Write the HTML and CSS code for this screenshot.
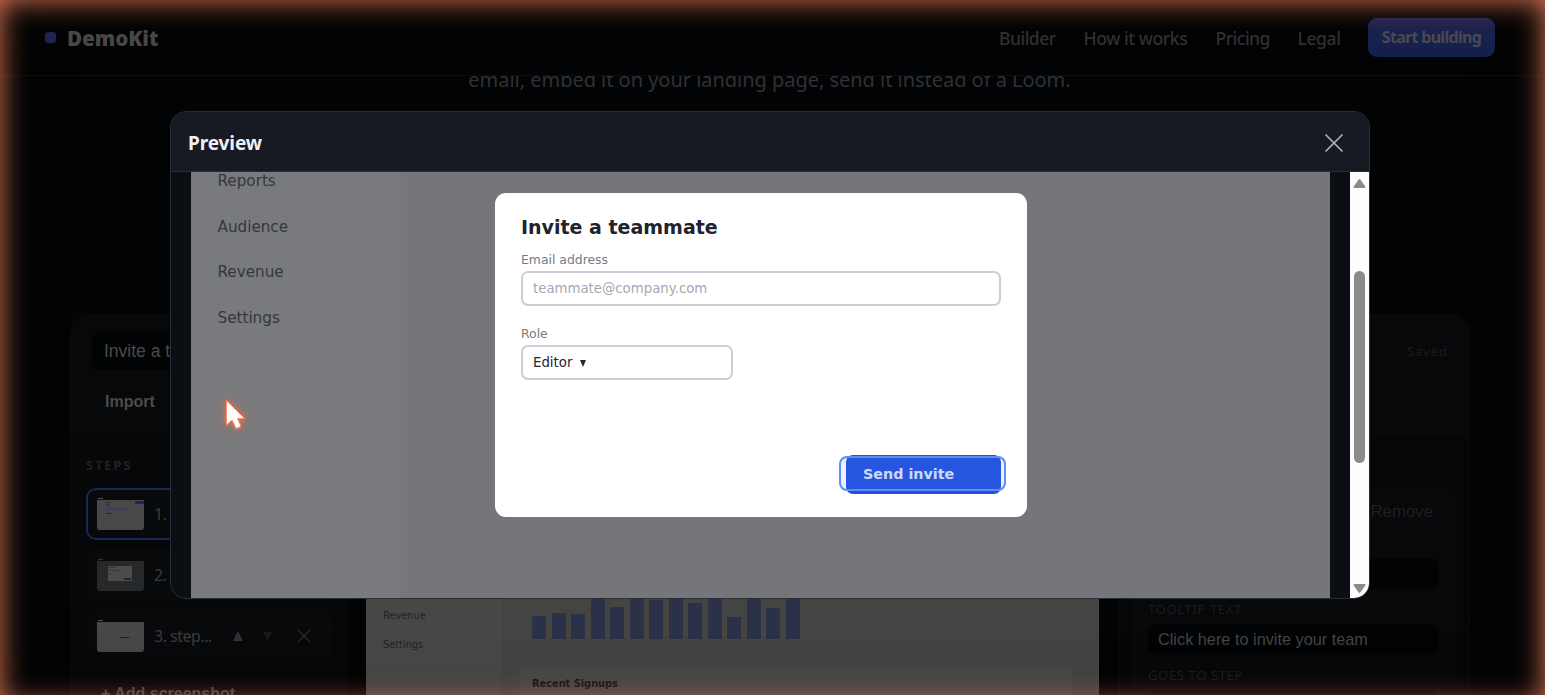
FILE: index.html
```html
<!DOCTYPE html>
<html lang="en">
<head>
  <meta charset="UTF-8" />
  <title>DemoKit</title>
  <meta name="viewport" content="width=device-width, initial-scale=1.0"/>
  <link rel="stylesheet" href="styles.css">
</head>
<body>
  <header class="topbar">
    <div class="brand"><span class="dot"></span><span class="brand-name">DemoKit</span></div>
    <nav class="nav">
      <a class="nav-builder">Builder</a>
      <a class="nav-how">How it works</a>
      <a class="nav-pricing">Pricing</a>
      <a class="nav-legal">Legal</a>
      <a class="cta">Start building</a>
    </nav>
  </header>

  <section class="hero">
    <p>email, embed it on your landing page, send it instead of a Loom.</p>
  </section>

  <main class="builder">
    <div class="toolbar">
      <div class="toolbar-row">
        <div class="title-input">Invite a teammate</div>
        <span class="saved">Saved</span>
      </div>
      <button class="import">Import</button>
    </div>
    <div class="workspace">
      <aside class="steps">
        <h2>STEPS</h2>
        <div class="step active">
          <svg class="thumb" width="47" height="33" viewBox="0 0 47 33">
            <path d="M0 2h47v27q0 3-3 3H3q-3 0-3-3z" fill="#484848"/>
            <path d="M1 .5h5" stroke="#555"/>
            <path d="M38 4.500h9" stroke="#1b2756" stroke-width="3"/>
            <path d="M9 4.500h5M9 7h4M9 15.500h6" stroke="#2b2b2b"/>
            <path d="M9 11.500h3m1-1h2m1 1h2m1-1h2m1 1h2m1-1h2m1 1h2" stroke="#383f5a" stroke-width="3"/>
          </svg>
          <span>1. step...</span>
        </div>
        <div class="step">
          <svg class="thumb" width="47" height="33" viewBox="0 0 47 33">
            <path d="M0 2h47v27q0 3-3 3H3q-3 0-3-3z" fill="#26282a"/>
            <path d="M1 .5h5" stroke="#333"/>
            <path d="M11 7h24v15H11z" fill="#4b4b4a"/>
            <path d="M12 8.500h7M12 11.500h12M12 14.500h2" stroke="#383838"/>
            <path d="M27 20h7" stroke="#18234e" stroke-width="2"/>
          </svg>
          <span>2. step...</span>
        </div>
        <div class="step">
          <svg class="thumb" width="47" height="33" viewBox="0 0 47 33">
            <path d="M0 2h47v27q0 3-3 3H3q-3 0-3-3z" fill="#474747"/>
            <path d="M1 .5h5" stroke="#555"/>
            <path d="M23 17.500h9" stroke="#202020"/>
          </svg>
          <span class="step-name">3. step...</span>
          <svg class="step-tools" width="84" height="16" viewBox="0 0 84 16">
            <path d="M0 13 5 3l5 10z" fill="#303236"/>
            <path d="M30 4h9l-4.500 9z" fill="#17181a"/>
            <path d="m65 2 12 12M77 2 65 14" stroke="#292a2d" stroke-width="1.200"/>
          </svg>
        </div>
        <button class="add">+ Add screenshot</button>
      </aside>

      <section class="canvas">
        <div class="shot">
          <div class="shot-nav">
            <span>Revenue</span>
            <span>Settings</span>
          </div>
          <div class="shot-main">
            <div class="chart">
              <i class="h23"></i><i class="h26"></i><i class="h25"></i><i class="h45"></i>
              <i class="h32"></i><i class="h45"></i><i class="h39"></i><i class="h45"></i>
              <i class="h36"></i><i class="h45"></i><i class="h22"></i><i class="h45"></i>
              <i class="h31"></i><i class="h45"></i>
            </div>
            <div class="signups">Recent Signups</div>
          </div>
        </div>
      </section>

      <aside class="props">
        <div class="hotspot">
          <span class="remove">Remove</span>
          <div class="field"></div>
          <label class="tooltip-label">TOOLTIP TEXT</label>
          <div class="field">Click here to invite your team</div>
          <label class="goes-label">GOES TO STEP</label>
          <div class="field"></div>
        </div>
      </aside>
    </div>
  </main>

  <div class="overlay">
    <div class="modal">
      <div class="modal-head">
        <h3>Preview</h3>
        <svg width="20" height="20" viewBox="0 0 20 20"><path d="m1.500 1.500 17 17M18.500 1.500l-17 17" stroke="#adb1ba" stroke-width="1.700"/></svg>
      </div>
      <div class="modal-body">
        <div class="stage">
          <div class="stage-nav">
            <span>Reports</span>
            <span>Audience</span>
            <span>Revenue</span>
            <span>Settings</span>
          </div>
          <div class="stage-main">
            <div class="invite">
              <h4>Invite a teammate</h4>
              <label>Email address</label>
              <div class="input placeholder">teammate@company.com</div>
              <label class="role">Role</label>
              <div class="input select">Editor <span class="caret"></span></div>
              <div class="send">Send invite<span class="send-ring"></span></div>
            </div>
          </div>
        </div>
        <div class="scrollbar">
          <svg width="13" height="11" viewBox="0 0 13 11"><path d="M6.500 2 11.500 9h-10z" fill="#8b8b8b" stroke="#8b8b8b" stroke-width="2" stroke-linejoin="round"/></svg>
          <div class="track"><div class="thumb-bar"></div></div>
          <svg width="13" height="11" viewBox="0 0 13 11"><path d="M6.500 9 1.500 2h10z" fill="#8b8b8b" stroke="#8b8b8b" stroke-width="2" stroke-linejoin="round"/></svg>
        </div>
      </div>
    </div>
  </div>

  <svg class="cursor" width="24" height="34" viewBox="0 0 24 34">
    <path d="M2.500 2.500v24.500l5.500-5 4 8.500 5-2-3.500-8h7z" fill="#fff" stroke="#ff8a66" stroke-width="1"/>
  </svg>
  <div class="glow"></div>
</body>
</html>
```
FILE: styles.css
```css
* {
  box-sizing: border-box;
}
body {
  margin: 0;
  height: 695px;
  overflow: hidden;
  background: #020305;
  color: #414141;
  font-family: "Noto Sans", "Open Sans", sans-serif;
}
button {
  border: 0;
  padding: 0;
  background: none;
  color: #4b4b4b;
  font: bold 16px "Liberation Sans", Arial, sans-serif;
}
.topbar {
  position: relative;
  z-index: 1;
  height: 76px;
  padding: 0 50px 0 45px;
  display: flex;
  align-items: center;
  justify-content: space-between;
  background: #020304;
  border-bottom: 1px solid #0c0d0e;
}
.brand {
  display: flex;
  align-items: center;
  gap: 11px;
  font-size: 20.500px;
  font-weight: 900;
  letter-spacing: 0;
  color: #484848;
}
.brand-name {
  padding-top: 1px;
}
.dot {
  width: 11px;
  height: 11px;
  border-radius: 3px;
  background: #1b2452;
}
.nav {
  display: flex;
  align-items: center;
  gap: 27px;
  font-size: 17.500px;
  font-weight: 500;
  color: #303134;
  white-space: nowrap;
}
.nav-builder {
  width: 57.500px;
  letter-spacing: -0.5px;
}
.nav-how {
  width: 105px;
  letter-spacing: -0.4px;
}
.nav-pricing {
  width: 55px;
  letter-spacing: -0.5px;
}
.nav-legal {
  width: 43.500px;
  letter-spacing: -0.4px;
}
.cta {
  width: 127px;
  height: 39px;
  line-height: 39px;
  text-align: center;
  border-radius: 9px;
  background: linear-gradient(#1d2350, #14204f);
  color: #4a4b51;
  font-size: 16px;
  font-weight: 700;
  letter-spacing: -0.7px;
}
.hero {
  height: 238px;
}
.hero p {
  margin: 0 0 0 -6px;
  position: relative;
  top: -10px;
  text-align: center;
  font-size: 20px;
  line-height: 27px;
  letter-spacing: -0.03px;
  color: #303134;
}
.builder {
  width: 1400px;
  height: 420px;
  margin-left: 70px;
  background: #040506;
  border: 1px solid #090a0b;
  border-radius: 18px;
  overflow: hidden;
}
.toolbar {
  height: 121px;
  padding: 17px 21px;
  background: #07080a;
}
.toolbar-row {
  display: flex;
  justify-content: space-between;
  align-items: center;
  height: 38px;
}
.title-input {
  width: 260px;
  height: 38px;
  padding: 0 12px;
  border-radius: 8px;
  background: #020304;
  font: 17.500px/38px "Liberation Sans", Arial, sans-serif;
  color: #4b4b4b;
}
.saved {
  font-size: 13px;
  letter-spacing: 1px;
  color: #1b1c1e;
}
.import {
  margin: 23px 13px;
}
.workspace {
  height: 300px;
  display: grid;
  grid-template-columns: 276px 1fr 351px;
}
.steps {
  padding: 20px 14px 0 15px;
  background: #060709;
  border-right: 1px solid #0a0b0c;
}
.steps h2 {
  margin: 0 0 14px;
  font-size: 13px;
  line-height: 18px;
  letter-spacing: 1.8px;
  color: #202124;
}
.step {
  display: flex;
  align-items: center;
  height: 52px;
  margin-bottom: 9px;
  padding: 0 9px;
  gap: 10px;
  border: 2px solid #08090b;
  border-radius: 10px;
  background: #08090b;
  font-size: 16px;
  line-height: 20px;
  letter-spacing: -0.3px;
  color: #3b3c3e;
}
.step span {
  margin-top: -1px;
}
.step.active {
  border-color: #172a52;
}
.thumb {
  flex: none;
}
.step-name {
  width: 69px;
  letter-spacing: -0.5px;
}
.add {
  display: block;
  margin: 23px 0 0 15px;
  color: #474747;
}
.canvas {
  padding: 0 19px 0 19px;
  background: #020304;
}
.shot {
  display: flex;
  width: 733px;
  height: 300px;
  background: #444443;
  font: 9.800px "DejaVu Sans", sans-serif;
}
.shot-nav {
  width: 136px;
  padding: 168px 17px 0;
  display: flex;
  flex-direction: column;
  gap: 5px;
  line-height: 24px;
  background: #474746;
  color: #222326;
}
.shot-main {
  width: 570px;
  padding: 158px 0 0 17px;
}
.chart {
  display: flex;
  align-items: flex-end;
  gap: 5.500px;
  height: 45px;
  margin-left: 13px;
}
.chart i {
  width: 14px;
  background: #2a3148;
}
.h22 { height: 22px; }
.h23 { height: 23px; }
.h25 { height: 25px; }
.h26 { height: 26px; }
.h31 { height: 31px; }
.h32 { height: 32px; }
.h36 { height: 36px; }
.h39 { height: 39px; }
.h45 { height: 45px; }
.signups {
  height: 80px;
  margin-top: 29px;
  padding: 10px 13px;
  background: #494847;
  font-weight: bold;
  color: #151517;
}
.props {
  padding: 52px 12px 0;
  background: #050607;
  border-left: 1px solid #090a0b;
}
.hotspot {
  height: 260px;
  padding: 11px 18px 0 17px;
  display: flex;
  flex-direction: column;
  border-radius: 8px;
  background: #07080a;
}
.remove {
  align-self: flex-end;
  margin-bottom: 33px;
  padding-right: 6px;
  line-height: 26px;
  font-family: "Liberation Sans", Arial, sans-serif;
  font-size: 16.800px;
  color: #1e1f22;
}
.field {
  flex: none;
  height: 31px;
  padding: 0 10px;
  border-radius: 8px;
  background: #020304;
  font: 16.300px/31px "Liberation Sans", Arial, sans-serif;
  color: #454545;
}
.hotspot label {
  font-size: 13px;
  line-height: 18px;
  letter-spacing: 0.65px;
  color: #1a1b1d;
}
.tooltip-label {
  margin: 11px 0 6px;
}
.goes-label {
  margin: 11px 0 7px;
}

/* Preview dialog */
.overlay {
  position: fixed;
  inset: 0;
  z-index: 5;
  display: flex;
  align-items: flex-start;
  justify-content: center;
  padding: 111px 5px 0 0;
}
.modal {
  width: 1200px;
  height: 488px;
  overflow: hidden;
  border: 1px solid #292d38;
  border-radius: 16px;
  background: #0b0f13;
}
.modal-head {
  display: flex;
  align-items: center;
  justify-content: space-between;
  height: 60px;
  padding: 3px 25px 0 17px;
  border-bottom: 1px solid #292c34;
  background: #171a23;
}
.modal-head h3 {
  margin: 0;
  font-size: 19px;
  font-weight: 700;
  letter-spacing: -0.1px;
  color: #eef0f5;
}
.modal-body {
  display: flex;
  justify-content: space-between;
  height: 426px;
  padding-left: 20px;
}
.stage {
  display: flex;
  width: 1139px;
  background: #757679;
  font-family: "DejaVu Sans", sans-serif;
}
.stage-nav {
  display: flex;
  flex-direction: column;
  gap: 25.500px;
  width: 210px;
  padding: 0 26.500px;
  background: #797a7d;
  color: #34373e;
  font-size: 15.200px;
  line-height: 20px;
}
.stage-nav span:first-child {
  margin-top: -1px;
}
.stage-main {
  flex: 1;
  padding: 21px 0 0 94px;
}
.invite {
  display: flex;
  flex-direction: column;
  width: 532px;
  height: 324px;
  padding: 22px 26px 23px;
  border-radius: 11px;
  background: #fff;
}
.invite h4 {
  margin: 0 0 12px;
  font-size: 19px;
  line-height: 24px;
  color: #20232d;
}
.invite label {
  font-size: 12.400px;
  line-height: 17px;
  color: #777b83;
}
.input {
  height: 35px;
  margin-top: 3px;
  padding: 0 10px;
  border: 2px solid #cbcdd8;
  border-radius: 7px;
  line-height: 31px;
  font-size: 13.300px;
}
.placeholder {
  line-height: 32px;
  color: #a6a8b2;
}
.invite .role {
  margin-top: 19px;
}
.select {
  display: flex;
  align-items: center;
  gap: 8px;
  width: 212px;
  color: #24262c;
}
.caret {
  margin-top: 2px;
  border: 3.500px solid transparent;
  border-top: 7px solid #24262c;
  border-bottom: 0;
}
.send {
  position: relative;
  align-self: flex-end;
  width: 155px;
  height: 39px;
  margin-top: auto;
  padding-left: 17px;
  border-radius: 7px;
  background: #2050dc;
  color: #dce5ff;
  font-size: 14.300px;
  font-weight: bold;
  line-height: 39px;
}
.send-ring {
  position: absolute;
  inset: 1px -5px 3px -7px;
  border: 2px solid #608cf6;
  border-radius: 8px;
  background: rgba(80, 130, 245, 0.12);
}
.scrollbar {
  display: flex;
  flex-direction: column;
  align-items: center;
  width: 19px;
  padding: 6px 0 4px;
  background: #fdfdfd;
}
.track {
  flex: 1;
  padding-top: 82px;
}
.thumb-bar {
  width: 11px;
  height: 192px;
  border-radius: 6px;
  background: #8b8b8b;
}
.cursor {
  position: fixed;
  left: 224px;
  top: 398px;
  z-index: 8;
  filter: drop-shadow(0 0 2px #ff7145) drop-shadow(0 0 8px rgba(255, 113, 69, 0.35));
}
.glow {
  position: fixed;
  inset: 0 0 -10px;
  z-index: 9;
  pointer-events: none;
  box-shadow: inset 0 0 28px rgba(235, 125, 90, 0.95), inset 0 0 80px rgba(90, 50, 20, 0.1);
}
```
